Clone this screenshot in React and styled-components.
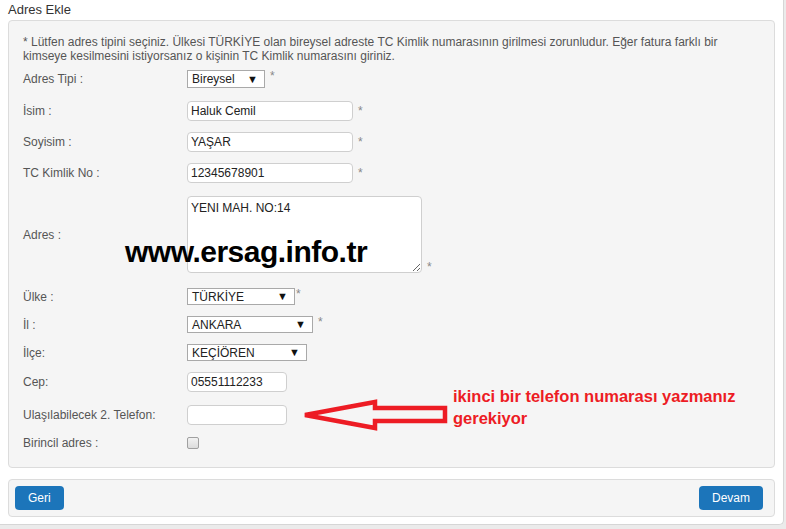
import styled, { createGlobalStyle } from "styled-components";

const GlobalStyle = createGlobalStyle`
  html, body {
    margin: 0;
    padding: 0;
    background: #ebebeb;
    font-family: "Liberation Sans", Arial, sans-serif;
    font-size: 12px;
  }
`;

const Page = styled.div`
  position: relative;
  width: 767px;
  height: 524px;
  padding: 0 8px;
  background: #fff;
  border-right: 1px solid #d6d6d6;
  border-bottom: 1px solid #d6d6d6;
  border-bottom-right-radius: 5px;
  box-sizing: content-box;
`;

const Title = styled.div`
  height: 20px;
  line-height: 20px;
  font-size: 13px;
  color: #333;
`;

const Panel = styled.div`
  background: #f5f5f5;
  border: 1px solid #dcdcdc;
  border-radius: 4px;
  padding: 14px 14px 17px;
  display: flex;
  flex-direction: column;
`;

const Note = styled.p`
  margin: 0;
  line-height: 14px;
  color: #555;
`;

const Row = styled.div`
  display: flex;
  align-items: center;
  margin-top: ${(p) => p.$top}px;
`;

const Label = styled.div`
  width: 164px;
  flex-shrink: 0;
  color: #555;
`;

const Field = styled.div`
  display: flex;
  align-items: ${(p) => p.$align || "center"};
`;

const Input = styled.input`
  box-sizing: border-box;
  width: ${(p) => p.$w}px;
  height: 20px;
  border: 1px solid #cfcfcf;
  border-radius: 4px;
  background: #fff;
  padding: 0 3px;
  font: inherit;
  color: #222;
  outline: none;
`;

const TextArea = styled.textarea`
  box-sizing: border-box;
  width: 235px;
  height: 77px;
  border: 1px solid #cfcfcf;
  border-radius: 4px;
  background: #fff;
  padding: 4px 3px;
  font: inherit;
  color: #222;
  outline: none;
`;

const Select = styled.div`
  box-sizing: border-box;
  width: ${(p) => p.$w}px;
  height: ${(p) => p.$h || 17}px;
  border: 1px solid #a9a9a9;
  background: #fff;
  display: flex;
  align-items: center;
  justify-content: space-between;
  padding: 0 6px 0 4px;
  color: #222;
`;

const Caret = styled.span`
  font-size: 11px;
  line-height: 11px;
  color: #111;
`;

const Star = styled.span`
  color: #888;
  margin-left: ${(p) => p.$gap ?? 5}px;
  line-height: 12px;
  align-self: ${(p) => p.$self || "auto"};
`;

const Check = styled.span`
  display: block;
  box-sizing: border-box;
  width: 12px;
  height: 12px;
  border: 1px solid #a0a0a0;
  border-radius: 2px;
  background: linear-gradient(#f2f2f2, #dcdcdc);
`;

const ButtonBar = styled.div`
  margin-top: 11px;
  background: #f5f5f5;
  border: 1px solid #dcdcdc;
  border-radius: 4px;
  padding: 6px 11px 6px 6px;
  display: flex;
  justify-content: space-between;
`;

const Button = styled.button`
  height: 24px;
  padding: 0 13px;
  border: none;
  border-radius: 4px;
  background: #1c75ba;
  color: #fff;
  font: inherit;
`;

const Watermark = styled.div`
  position: absolute;
  left: 125px;
  top: 237px;
  font-size: 30px;
  line-height: 30px;
  font-weight: bold;
  letter-spacing: -0.5px;
  color: #000;
`;

const Arrow = styled.svg`
  position: absolute;
  left: 300px;
  top: 398px;
`;

const Hint = styled.div`
  position: absolute;
  left: 453px;
  top: 385px;
  font-size: 16.5px;
  line-height: 22px;
  font-weight: bold;
  color: #ed1c24;
`;

const Dropdown = ({ w, h, value }) => (
  <Select $w={w} $h={h}>
    <span>{value}</span>
    <Caret>▼</Caret>
  </Select>
);

export default function App() {
  return (
    <>
      <GlobalStyle />
      <Page>
        <Title>Adres Ekle</Title>
        <Panel>
          <Note>
            * Lütfen adres tipini seçiniz. Ülkesi TÜRKİYE olan bireysel adreste TC Kimlik
            numarasının girilmesi zorunludur. Eğer fatura farklı bir kimseye kesilmesini
            istiyorsanız o kişinin TC Kimlik numarasını giriniz.
          </Note>
          <Row $top={7}>
            <Label>Adres Tipi :</Label>
            <Field $align="flex-start">
              <Dropdown w={78} h={18} value="Bireysel" />
              <Star>*</Star>
            </Field>
          </Row>
          <Row $top={13}>
            <Label>İsim :</Label>
            <Field>
              <Input $w={166} defaultValue="Haluk Cemil" />
              <Star>*</Star>
            </Field>
          </Row>
          <Row $top={11}>
            <Label>Soyisim :</Label>
            <Field>
              <Input $w={166} defaultValue="YAŞAR" />
              <Star>*</Star>
            </Field>
          </Row>
          <Row $top={11}>
            <Label>TC Kimlik No :</Label>
            <Field>
              <Input $w={166} defaultValue="12345678901" />
              <Star>*</Star>
            </Field>
          </Row>
          <Row $top={13}>
            <Label>Adres :</Label>
            <Field>
              <TextArea defaultValue="YENI MAH. NO:14" />
              <Star $self="flex-end">*</Star>
            </Field>
          </Row>
          <Row $top={15}>
            <Label>Ülke :</Label>
            <Field $align="flex-start">
              <Dropdown w={108} value="TÜRKİYE" />
              <Star $gap={1}>*</Star>
            </Field>
          </Row>
          <Row $top={11}>
            <Label>İl :</Label>
            <Field $align="flex-start">
              <Dropdown w={126} value="ANKARA" />
              <Star>*</Star>
            </Field>
          </Row>
          <Row $top={11}>
            <Label>İlçe:</Label>
            <Field>
              <Dropdown w={120} value="KEÇİÖREN" />
            </Field>
          </Row>
          <Row $top={11}>
            <Label>Cep:</Label>
            <Field>
              <Input $w={100} defaultValue="05551112233" />
            </Field>
          </Row>
          <Row $top={13}>
            <Label>Ulaşılabilecek 2. Telefon:</Label>
            <Field>
              <Input $w={100} defaultValue="" />
            </Field>
          </Row>
          <Row $top={11}>
            <Label>Birincil adres :</Label>
            <Field>
              <Check />
            </Field>
          </Row>
        </Panel>
        <ButtonBar>
          <Button>Geri</Button>
          <Button>Devam</Button>
        </ButtonBar>

        <Watermark>www.ersag.info.tr</Watermark>
        <Arrow width="150" height="35" viewBox="0 0 150 35">
          <polygon
            points="5,17 75,4 75,10 145,10 145,23 75,23 75,30"
            fill="none"
            stroke="#ed1c24"
            strokeWidth="4.5"
            strokeLinejoin="miter"
          />
        </Arrow>
        <Hint>
          ikinci bir telefon numarası yazmanız
          <br />
          gerekiyor
        </Hint>
      </Page>
    </>
  );
}
